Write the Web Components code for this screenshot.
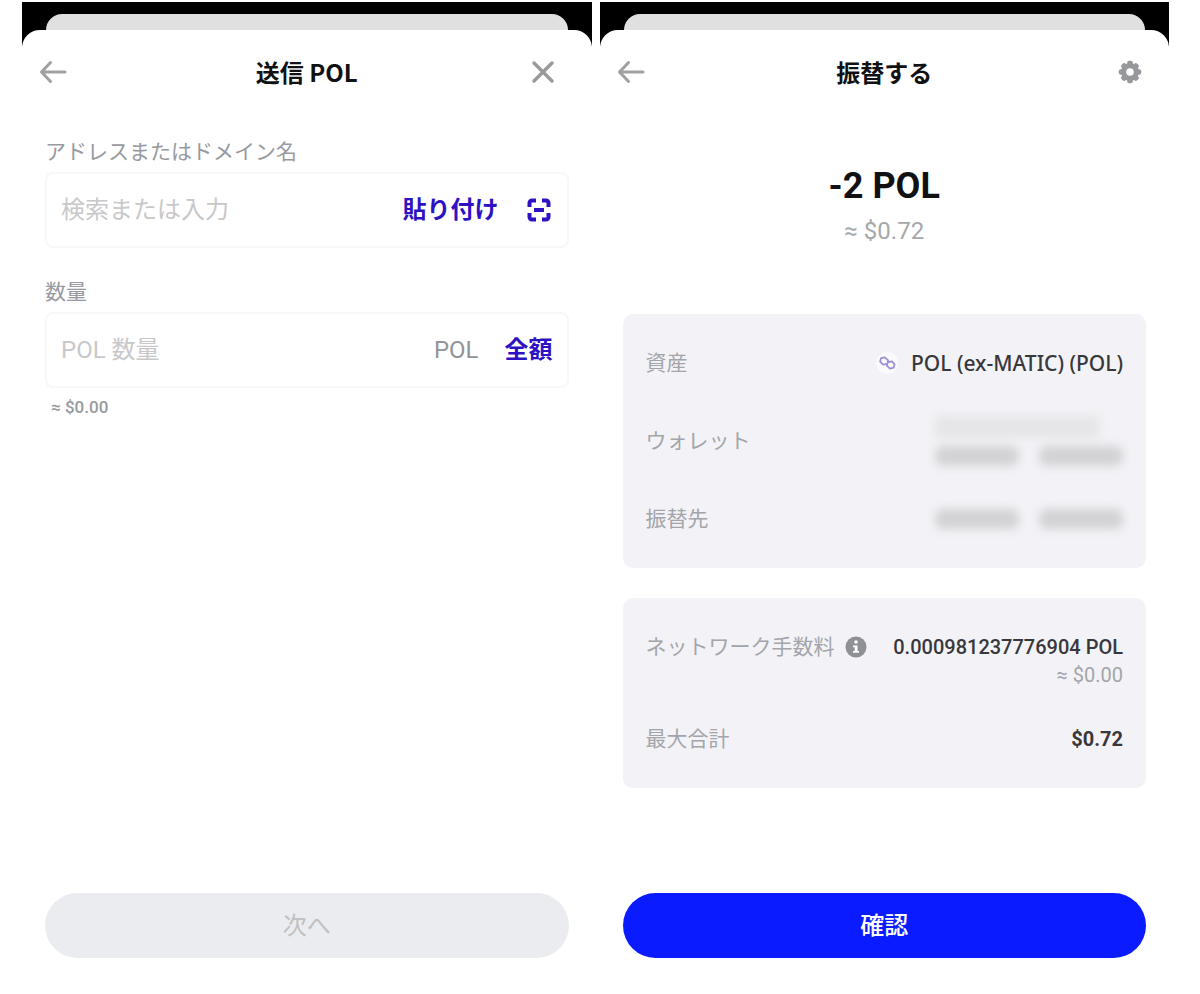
<!DOCTYPE html>
<html lang="ja">
<head>
<meta charset="utf-8">
<meta name="viewport" content="width=device-width, initial-scale=1">
<title>送信 POL</title>
<style>
  :root {
    --color-accent: #0a1cff;
    --color-link: #2d12c4;
    --color-ink: #111113;
    --color-muted: #979a9e;
    --color-card: #f3f3f7;
  }
  body {
    margin: 0;
    background: #fff;
    color: var(--color-ink);
    font-family: Roboto, "Noto Sans CJK JP", sans-serif;
  }
</style>
</head>
<body>
<wallet-app></wallet-app>

<script>
/**
 * Icon (<wallet-icon name="...">)
 */
const ICONS = {
  back: '<svg width="28" height="24" viewBox="0 0 28 24" fill="none" stroke="#a0a0a0" stroke-width="3" stroke-linecap="round" stroke-linejoin="round"><path d="M11.5 2.500 2.500 12l9 9.500M3 12h23"/></svg>',
  close: '<svg width="28" height="28" viewBox="0 0 28 28" fill="none" stroke="#999" stroke-width="3.400" stroke-linecap="round"><path d="M5 5l18 18M23 5 5 23"/></svg>',
  gear: '<svg width="28" height="28" viewBox="-2 -2 28 28"><g fill="#96989c"><circle cx="12" cy="12" r="9"/><rect x="9.200" y="0.800" width="5.600" height="22.400" rx="2"/><rect x="0.800" y="9.200" width="22.400" height="5.600" rx="2"/><g transform="rotate(45 12 12)"><rect x="9.200" y="1" width="5.600" height="22" rx="2"/><rect x="1" y="9.200" width="22" height="5.600" rx="2"/></g></g><circle cx="12" cy="12" r="3.800" fill="#fff"/></svg>',
  scan: '<svg width="28" height="24" viewBox="-2 0 28 24" fill="none" stroke="#2d12c4" stroke-width="4"><path d="M2.500 9V5a2.500 2.500 0 0 1 2.500-2.500H9M15 2.500h4a2.500 2.500 0 0 1 2.500 2.500V9M21.500 15v4a2.500 2.500 0 0 1-2.500 2.500H15M9 21.500H5a2.500 2.500 0 0 1-2.500-2.500V15M7 12h10"/></svg>',
  info: '<svg width="22" height="22" viewBox="0 0 22 22"><circle cx="11" cy="11" r="10.500" fill="#8f9094"/><circle cx="11" cy="6" r="1.800" fill="#fff"/><path d="M8 9.500h4.500V15H14v1.800H8V15h1.700v-3.700H8z" fill="#fff"/></svg>',
  polygon: '<svg width="24" height="24" viewBox="0 0 24 24"><circle cx="12" cy="12" r="11" fill="#fafafd"/><g transform="rotate(14 12 12)" fill="none" stroke="#a08fd8" stroke-width="1.800" stroke-linejoin="round"><path d="M12.500 12.800 8.500 14.500 5 12.300V8.800L8.500 7l4 2.200v5.300l3.700 2.300 3.400-2v-3.500l-3.300-2.100-3.800 1.900"/></g></svg>'
};

class WalletIcon extends HTMLElement {
  constructor() {
    super();
    this.attachShadow({ mode: 'open' });
  }

  connectedCallback() {
    this.shadowRoot.innerHTML = `
      <style>
        :host { display: inline-flex; flex: none; }
        svg { display: block; }
      </style>
      ${ICONS[this.getAttribute('name')] || ''}
    `;
  }
}

/**
 * Button (<wallet-button variant="primary | disabled | link | icon">)
 */
class WalletButton extends HTMLElement {
  constructor() {
    super();
    this.attachShadow({ mode: 'open' });
  }

  connectedCallback() {
    const variant = this.getAttribute('variant');
    const label = this.getAttribute('label');
    this.shadowRoot.innerHTML = `
      <style>
        :host { display: block; flex: none; }
        button {
          display: flex;
          align-items: center;
          justify-content: center;
          margin: 0;
          padding: 0;
          border: 0;
          background: none;
          font: inherit;
          font-size: 24px;
          line-height: 36px;
          cursor: pointer;
        }
        .link {
          color: var(--color-link);
          font-weight: 700;
        }
        .primary, .disabled {
          width: 100%;
          height: 65px;
          border-radius: 33px;
        }
        .primary {
          background: var(--color-accent);
          color: #fff;
          font-weight: 500;
        }
        .disabled {
          background: #ebecef;
          color: #bfc0c3;
          cursor: default;
        }
      </style>
      <button type="button" class="${variant}"
        ${label ? `aria-label="${label}"` : ''}
        ${variant === 'disabled' ? 'disabled' : ''}><slot></slot></button>
    `;
  }
}

/**
 * Modal sheet (<wallet-sheet>) with the stacked card behind it
 */
class WalletSheet extends HTMLElement {
  constructor() {
    super();
    this.attachShadow({ mode: 'open' });
  }

  connectedCallback() {
    this.shadowRoot.innerHTML = `
      <style>
        :host {
          display: flex;
          flex-direction: column;
          min-width: 0;
          background: linear-gradient(#000 44px, #fff 44px);
        }
        .behind {
          height: 16px;
          margin: 12px 24px 0;
          border-radius: 16px 16px 0 0;
          background: #e0e0e0;
        }
        .sheet {
          flex: 1;
          display: flex;
          flex-direction: column;
          border-radius: 18px 18px 0 0;
          background: #fff;
        }
        header {
          display: grid;
          grid-template-columns: 1fr auto 1fr;
          align-items: center;
          height: 84px;
        }
        .start { padding-left: 17px; }
        .end {
          justify-self: end;
          padding-right: var(--action-inset, 35px);
        }
        h1 {
          margin: 0;
          font-family: "Noto Sans CJK JP", sans-serif;
          font-size: 24px;
          line-height: 36px;
          font-weight: 700;
        }
        main {
          flex: 1;
          display: flex;
          flex-direction: column;
          padding: 24px 23px 36px;
        }
        footer { margin-top: auto; }
      </style>
      <div class="behind"></div>
      <section class="sheet">
        <header>
          <div class="start">
            <wallet-button variant="icon" label="戻る"><wallet-icon name="back"></wallet-icon></wallet-button>
          </div>
          <h1>${this.getAttribute('heading')}</h1>
          <div class="end"><slot name="action"></slot></div>
        </header>
        <main>
          <slot></slot>
          <footer><slot name="footer"></slot></footer>
        </main>
      </section>
    `;
  }
}

/**
 * Text field (<wallet-field>) with trailing actions in the default slot
 */
class WalletField extends HTMLElement {
  constructor() {
    super();
    this.attachShadow({ mode: 'open' });
  }

  connectedCallback() {
    this.shadowRoot.innerHTML = `
      <style>
        :host {
          display: block;
          margin-bottom: 30px;
        }
        label {
          display: block;
          margin-bottom: 6px;
          color: var(--color-muted);
          font-size: 21px;
          line-height: 28px;
        }
        .box {
          display: flex;
          align-items: center;
          gap: 26px;
          height: 76px;
          box-sizing: border-box;
          padding: 0 14px;
          border: 2px solid #f7f7f9;
          border-radius: 8px;
        }
        input {
          flex: 1;
          min-width: 0;
          padding: 0;
          border: 0;
          outline: 0;
          background: none;
          color: inherit;
          font: inherit;
          font-size: 24px;
          line-height: 36px;
        }
        input::placeholder {
          color: #c8c8ca;
          opacity: 1;
        }
        .hint {
          margin: 8px 6px 0;
          color: var(--color-muted);
          font-size: 17px;
          line-height: 22px;
          font-weight: 500;
        }
        .hint:empty { display: none; }
      </style>
      <label for="control">${this.getAttribute('label')}</label>
      <div class="box">
        <input id="control" type="text" placeholder="${this.getAttribute('placeholder')}">
        <slot></slot>
      </div>
      <p class="hint">${this.getAttribute('hint') || ''}</p>
    `;
  }
}

/**
 * Card (<wallet-card>) and its rows (<wallet-row>)
 */
class WalletCard extends HTMLElement {
  constructor() {
    super();
    this.attachShadow({ mode: 'open' });
  }

  connectedCallback() {
    this.shadowRoot.innerHTML = `
      <style>
        :host {
          display: flex;
          flex-direction: column;
          gap: var(--row-gap, 39px);
          margin-bottom: 30px;
          padding: 35px 23px;
          border-radius: 10px;
          background: var(--color-card);
        }
      </style>
      <slot></slot>
    `;
  }
}

class WalletRow extends HTMLElement {
  constructor() {
    super();
    this.attachShadow({ mode: 'open' });
  }

  connectedCallback() {
    this.shadowRoot.innerHTML = `
      <style>
        :host {
          display: flex;
          align-items: center;
          justify-content: space-between;
          line-height: 28px;
        }
        :host([top]) { align-items: flex-start; }
        .label {
          display: flex;
          align-items: center;
          gap: 10px;
          color: #a3a5aa;
          font-size: 21px;
          white-space: nowrap;
        }
        .value {
          display: flex;
          align-items: center;
          gap: 12px;
          color: #38383c;
          font-size: 20px;
          font-weight: 500;
          text-align: right;
          white-space: nowrap;
        }
      </style>
      <div class="label">${this.getAttribute('label')}<slot name="info"></slot></div>
      <div class="value"><slot></slot></div>
    `;
  }
}

/**
 * Hidden address (<wallet-redacted>), the name line is optional
 */
class WalletRedacted extends HTMLElement {
  constructor() {
    super();
    this.attachShadow({ mode: 'open' });
  }

  connectedCallback() {
    this.shadowRoot.innerHTML = `
      <style>
        :host {
          display: grid;
          grid-template-columns: 84px 84px;
          gap: 8px 20px;
          filter: blur(5px);
        }
        .name {
          grid-column: 1 / 3;
          height: 22px;
          margin-right: 24px;
          background: #e5e5e7;
        }
        .part {
          height: 20px;
          border-radius: 8px;
          background: #d2d2d5;
        }
      </style>
      ${this.hasAttribute('named') ? '<div class="name"></div>' : ''}
      <div class="part"></div>
      <div class="part"></div>
    `;
  }
}

/**
 * App (<wallet-app>): the send form next to its confirmation
 */
class WalletApp extends HTMLElement {
  constructor() {
    super();
    this.attachShadow({ mode: 'open' });
  }

  connectedCallback() {
    this.shadowRoot.innerHTML = `
      <style>
        :host {
          display: grid;
          grid-template-columns: 1fr 1fr;
          gap: 8px;
          box-sizing: border-box;
          min-height: 100vh;
          padding: 2px 31px 0 22px;
        }
        .confirm { --action-inset: 25px; }
        .unit {
          color: #929396;
          font-size: 24px;
          line-height: 36px;
        }
        .amount {
          margin: 28px 0 0;
          font-size: 36px;
          line-height: 40px;
          font-weight: 700;
          text-align: center;
        }
        .fiat {
          margin: 11px 0 69px;
          color: #a6a8ac;
          font-size: 24px;
          line-height: 28px;
          text-align: center;
        }
        .asset {
          font-family: "Noto Sans", sans-serif;
          font-size: 21px;
        }
        .fees { --row-gap: 36px; }
        .sub {
          display: block;
          color: #a3a5aa;
          font-weight: 400;
        }
        strong { font-weight: 700; }
      </style>

      <wallet-sheet heading="送信 POL">
        <wallet-button slot="action" variant="icon" label="閉じる"><wallet-icon name="close"></wallet-icon></wallet-button>
        <wallet-field label="アドレスまたはドメイン名" placeholder="検索または入力">
          <wallet-button variant="link">貼り付け</wallet-button>
          <wallet-button variant="icon" label="スキャン"><wallet-icon name="scan"></wallet-icon></wallet-button>
        </wallet-field>
        <wallet-field label="数量" placeholder="POL 数量" hint="≈ $0.00">
          <span class="unit">POL</span>
          <wallet-button variant="link">全額</wallet-button>
        </wallet-field>
        <wallet-button slot="footer" variant="disabled">次へ</wallet-button>
      </wallet-sheet>

      <wallet-sheet class="confirm" heading="振替する">
        <wallet-button slot="action" variant="icon" label="設定"><wallet-icon name="gear"></wallet-icon></wallet-button>
        <p class="amount">-2 POL</p>
        <p class="fiat">≈ $0.72</p>
        <wallet-card>
          <wallet-row label="資産">
            <wallet-icon name="polygon"></wallet-icon>
            <span class="asset">POL (ex-MATIC) (POL)</span>
          </wallet-row>
          <wallet-row label="ウォレット"><wallet-redacted named></wallet-redacted></wallet-row>
          <wallet-row label="振替先"><wallet-redacted></wallet-redacted></wallet-row>
        </wallet-card>
        <wallet-card class="fees">
          <wallet-row label="ネットワーク手数料" top>
            <wallet-icon slot="info" name="info"></wallet-icon>
            <span>0.000981237776904 POL<span class="sub">≈ $0.00</span></span>
          </wallet-row>
          <wallet-row label="最大合計"><strong>$0.72</strong></wallet-row>
        </wallet-card>
        <wallet-button slot="footer" variant="primary">確認</wallet-button>
      </wallet-sheet>
    `;
  }
}

customElements.define('wallet-icon', WalletIcon);
customElements.define('wallet-button', WalletButton);
customElements.define('wallet-sheet', WalletSheet);
customElements.define('wallet-field', WalletField);
customElements.define('wallet-card', WalletCard);
customElements.define('wallet-row', WalletRow);
customElements.define('wallet-redacted', WalletRedacted);
customElements.define('wallet-app', WalletApp);
</script>
</body>
</html>
